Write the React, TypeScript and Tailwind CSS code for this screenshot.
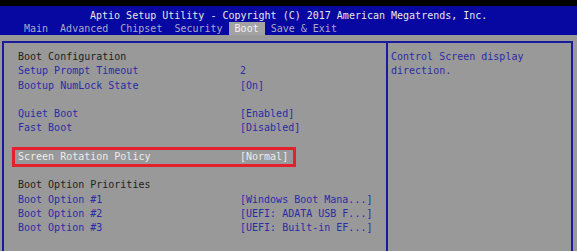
const rowClass = "h-[14.25px] leading-[14.25px] whitespace-pre";

type Item = { label: string; value?: string; kind: "head" | "item" | "blank" | "selected" };

const items: Item[] = [
  { label: "Boot Configuration", kind: "head" },
  { label: "Setup Prompt Timeout", value: "2", kind: "item" },
  { label: "Bootup NumLock State", value: "[On]", kind: "item" },
  { label: "", kind: "blank" },
  { label: "Quiet Boot", value: "[Enabled]", kind: "item" },
  { label: "Fast Boot", value: "[Disabled]", kind: "item" },
  { label: "", kind: "blank" },
  { label: "Screen Rotation Policy", value: "[Normal]", kind: "selected" },
  { label: "", kind: "blank" },
  { label: "Boot Option Priorities", kind: "head" },
  { label: "Boot Option #1", value: "[Windows Boot Mana...]", kind: "item" },
  { label: "Boot Option #2", value: "[UEFI: ADATA USB F...]", kind: "item" },
  { label: "Boot Option #3", value: "[UEFI: Built-in EF...]", kind: "item" },
];

const tabs = ["Main", "Advanced", "Chipset", "Security", "Boot", "Save & Exit"];

const Row = ({ item }: { item: Item }) => {
  if (item.kind === "blank") return <div className={rowClass}> </div>;
  if (item.kind === "head")
    return <div className={`${rowClass} text-[#1e1e1e]`}>{item.label}</div>;
  if (item.kind === "selected")
    return (
      <div
        className={`${rowClass} -ml-[3px] pl-[3px] w-[278px] grid grid-cols-[222px_1fr] text-[#ececec] outline-[3px] outline-solid outline-[#e3202b]`}
      >
        <span>{item.label}</span>
        <span>{item.value}</span>
      </div>
    );
  return (
    <div className={`${rowClass} grid grid-cols-[222px_1fr] text-[#2b2ba6]`}>
      <span>{item.label}</span>
      <span>{item.value}</span>
    </div>
  );
};

export default function App() {
  return (
    <div className="w-[577px] h-[251px] overflow-hidden bg-[#999999] font-['DejaVu_Sans_Mono',monospace] text-[10px]">
      <div className="h-[6px] bg-black" />
      <div className="h-[29px] bg-[#0707a2]">
        <div className="pt-[3px] h-[16px] pl-[90px] leading-[13px] whitespace-pre text-[#e6e6e6]">
          Aptio Setup Utility - Copyright (C) 2017 American Megatrends, Inc.
        </div>
        <div className="flex h-[13px] leading-[13px] pl-[24px] gap-[12px] whitespace-pre">
          {tabs.map((t) =>
            t === "Boot" ? (
              <span key={t} className="-mx-[6px] px-[6px] bg-[#a3a3a3] text-[#f2f2f2]">
                {t}
              </span>
            ) : (
              <span key={t} className="text-[#a9a9c9]">
                {t}
              </span>
            )
          )}
        </div>
      </div>
      <div className="pt-[6px] pl-[2px]">
        <div className="w-[571px] h-[230px] border-2 border-[#1a1a9c] grid grid-cols-[382px_1fr]">
          <div className="pt-[7px] pl-[14px]">
            {items.map((it, i) => (
              <Row key={i} item={it} />
            ))}
          </div>
          <div className="border-l-2 border-[#1a1a9c] pt-[7px] pl-[3px] text-[#2b2ba6]">
            <div className={rowClass}>Control Screen display</div>
            <div className={rowClass}>direction.</div>
          </div>
        </div>
      </div>
    </div>
  );
}
